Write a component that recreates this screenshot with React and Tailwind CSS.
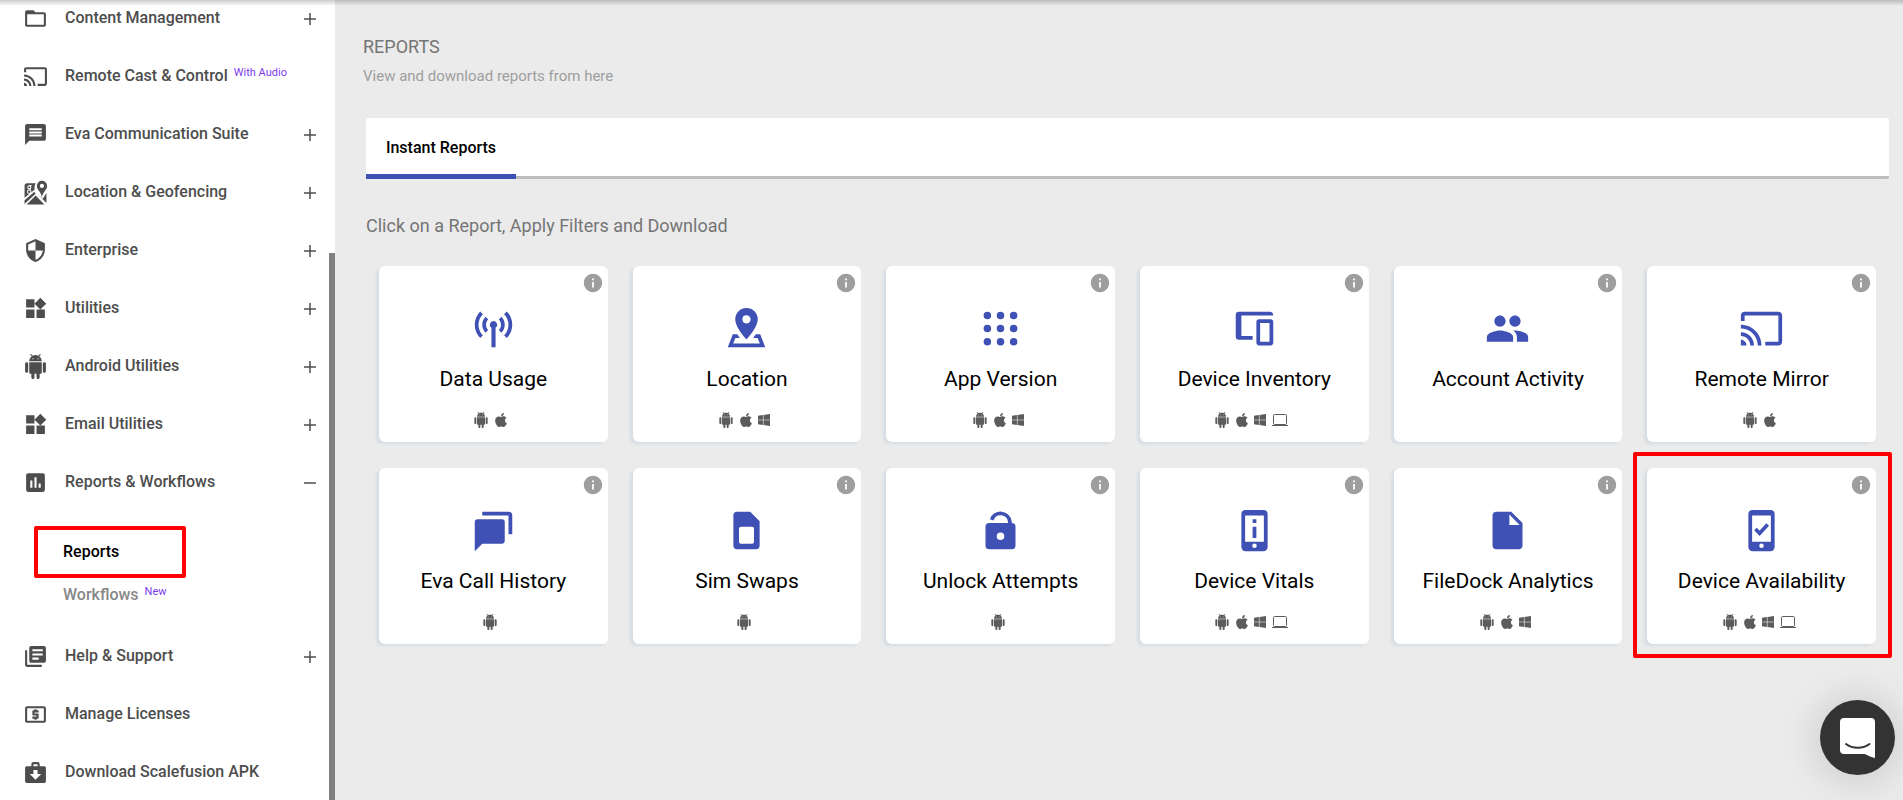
import React, { useState } from "react";
import {
  MdCast,
  MdFolderOpen,
  MdInfo,
  MdInsertDriveFile,
  MdLibraryBooks,
  MdLocalAtm,
  MdMessage,
  MdAssessment,
  MdPeople,
  MdSecurity,
  MdWidgets,
} from "react-icons/md";
import { FaApple, FaWindows } from "react-icons/fa";

const Svg = ({ children, className = "" }) => (
  <svg viewBox="0 0 24 24" fill="currentColor" className={className} aria-hidden="true">
    {children}
  </svg>
);

const AndroidIcon = ({ className }) => (
  <Svg className={className}>
    <path d="M6 18c0 .55.45 1 1 1h1v3.5c0 .83.67 1.5 1.5 1.5s1.5-.67 1.5-1.5V19h2v3.5c0 .83.67 1.5 1.5 1.5s1.5-.67 1.5-1.5V19h1c.55 0 1-.45 1-1V8H6v10zM3.5 8C2.67 8 2 8.67 2 9.5v7c0 .83.67 1.5 1.5 1.5S5 17.33 5 16.5v-7C5 8.67 4.33 8 3.5 8zm17 0c-.83 0-1.5.67-1.5 1.5v7c0 .83.67 1.5 1.5 1.5s1.5-.67 1.5-1.5v-7c0-.83-.67-1.5-1.5-1.5zm-4.97-5.84l1.3-1.3c.2-.2.2-.51 0-.71-.2-.2-.51-.2-.71 0l-1.48 1.48C13.85 1.23 12.95 1 12 1c-.96 0-1.86.23-2.66.63L7.85.15c-.2-.2-.51-.2-.71 0-.2.2-.2.51 0 .71l1.31 1.31C6.97 3.26 6 5.01 6 7h12c0-1.99-.97-3.75-2.47-4.84zM10 5H9V4h1v1zm5 0h-1V4h1v1z" />
  </Svg>
);

const MapsIcon = ({ className }) => (
  <Svg className={className}>
    <path d="M4 3a2.5 2.5 0 0 0-2.5 2.5V17L11.300 9.200C10.900 8 10.800 5 12.300 3z" />
    <path d="M3.500 23.500 12.200 14.800 20.500 23.500z" />
    <path d="M1.500 19.500 10.900 11.300 12 13.200 1.500 23z" />
    <path d="M14 13.500 22.500 22V12.500L19 18z" />
    <path
      fillRule="evenodd"
      d="M18.200.8a4.900 4.900 0 0 0-4.900 4.900c0 3.800 4 5.600 4.900 10.800.9-5.200 4.900-7 4.900-10.800A4.900 4.900 0 0 0 18.200.8zm0 2.900a2 2 0 1 1 0 4 2 2 0 0 1 0-4z"
    />
    <g fill="none" stroke="white" strokeWidth="1">
      <circle cx="6" cy="7" r="1.500" />
      <circle cx="6" cy="11.300" r="1.700" />
      <path d="M6 5.400h2.200M7.300 8l-1 1.600" />
    </g>
  </Svg>
);

const ApkIcon = ({ className }) => (
  <Svg className={className}>
    <path
      fillRule="evenodd"
      d="M10 2a2 2 0 0 0-2 2v2H3.500A1.500 1.500 0 0 0 2 7.500v13A1.500 1.500 0 0 0 3.500 22h17a1.500 1.500 0 0 0 1.500-1.500v-13A1.500 1.500 0 0 0 20.500 6H16V4a2 2 0 0 0-2-2zm0 2h4v2h-4zm0 5.500h4v4h3.500L12 19l-5.500-5.500H10z"
    />
  </Svg>
);

const TowerIcon = ({ className }) => (
  <Svg className={className}>
    <path d="M4.930 2.930C3.120 4.740 2 7.240 2 10s1.120 5.260 2.930 7.070l1.410-1.410C4.890 14.220 4 12.220 4 10s.89-4.220 2.340-5.660zM19.070 2.930l-1.410 1.410C19.110 5.790 20 7.790 20 10s-.89 4.220-2.340 5.660l1.410 1.410C20.880 15.260 22 12.760 22 10s-1.120-5.260-2.930-7.070zM7.760 5.760C6.670 6.850 6 8.350 6 10s.67 3.150 1.760 4.240l1.410-1.410C8.450 12.110 8 11.110 8 10s.45-2.110 1.170-2.830zM16.240 5.760l-1.410 1.410C15.550 7.890 16 8.890 16 10s-.45 2.110-1.170 2.830l1.410 1.410C17.330 13.150 18 11.650 18 10s-.67-3.150-1.760-4.240zM12 8a2 2 0 0 0-1.100 3.650V22h2.200V11.650A2 2 0 0 0 12 8z" />
  </Svg>
);

const LocationIcon = ({ className }) => (
  <Svg className={className}>
    <path
      fillRule="evenodd"
      d="M12 1a6 6 0 0 0-6 6c0 4.500 6 10.800 6 10.800S18 11.500 18 7a6 6 0 0 0-6-6zm0 3.900a2.200 2.200 0 1 1 0 4.400 2.200 2.200 0 0 1 0-4.400z"
    />
    <path d="M4.700 15h2.400c.4.700.9 1.400 1.400 2H6.100l-1.200 3h14.200l-1.200-3h-2.400c.5-.6 1-1.300 1.400-2h2.400L22 22H2z" />
  </Svg>
);

const AppsIcon = ({ className }) => (
  <Svg className={className}>
    {[5, 12, 19].map((y) =>
      [5, 12, 19].map((x) => <circle key={`${x}-${y}`} cx={x} cy={y} r="2" />)
    )}
  </Svg>
);

const DevicesIcon = ({ className }) => (
  <Svg className={className}>
    <path d="M22 5c0-1.100-.7-2-1.700-2H3.700A1.700 1.700 0 0 0 2 4.700v11.600A1.700 1.700 0 0 0 3.700 18H11v-2H5V5z" />
    <path
      fillRule="evenodd"
      d="M14.500 7A1.500 1.500 0 0 0 13 8.500v11a1.500 1.500 0 0 0 1.500 1.500h6a1.500 1.500 0 0 0 1.500-1.500v-11A1.500 1.500 0 0 0 20.500 7zm.5 2h5v10h-5z"
    />
  </Svg>
);

const ChatIcon = ({ className }) => (
  <Svg className={className}>
    <path d="M6 2h14a2 2 0 0 1 2 2v10h-2V4H6z" />
    <path d="M3.500 6h13A1.500 1.500 0 0 1 18 7.500v10a1.500 1.500 0 0 1-1.500 1.500H6l-4 4V7.500A1.500 1.500 0 0 1 3.500 6z" />
  </Svg>
);

const SimIcon = ({ className }) => (
  <Svg className={className}>
    <path
      fillRule="evenodd"
      d="M7 2a2 2 0 0 0-2 2v16a2 2 0 0 0 2 2h10a2 2 0 0 0 2-2V7l-5-5zm2 8h6a1 1 0 0 1 1 1v7a1 1 0 0 1-1 1H9a1 1 0 0 1-1-1v-7a1 1 0 0 1 1-1z"
    />
  </Svg>
);

const UnlockIcon = ({ className }) => (
  <Svg className={className}>
    <path d="M7.300 6.300A5 5 0 0 1 17 7.300V9" fill="none" stroke="currentColor" strokeWidth="2" />
    <path
      fillRule="evenodd"
      d="M6 8a2 2 0 0 0-2 2v10a2 2 0 0 0 2 2h12a2 2 0 0 0 2-2V10a2 2 0 0 0-2-2zm6 5a2 2 0 1 1 0 4 2 2 0 0 1 0-4z"
    />
  </Svg>
);

const PhoneIcon = ({ className, children }) => (
  <Svg className={className}>
    <path
      fillRule="evenodd"
      d="M7.200 1A2.200 2.200 0 0 0 5 3.200v17.600A2.200 2.200 0 0 0 7.200 23h9.600a2.200 2.200 0 0 0 2.200-2.200V3.200A2.200 2.200 0 0 0 16.800 1zM7 4h10v14H7zm5 14.900a1.200 1.200 0 1 1 0 2.400 1.200 1.200 0 0 1 0-2.400z"
    />
    {children}
  </Svg>
);

const VitalsIcon = ({ className }) => (
  <PhoneIcon className={className}>
    <path d="M11 6h2v2h-2zM11 10h2v6h-2z" />
  </PhoneIcon>
);

const AvailabilityIcon = ({ className }) => (
  <PhoneIcon className={className}>
    <path d="M8.800 11.200 11 13.500 15.300 8.800" fill="none" stroke="currentColor" strokeWidth="1.900" />
  </PhoneIcon>
);

const LaptopIcon = () => (
  <svg viewBox="0 0 16 14" className="h-3.5 w-4" fill="none" stroke="currentColor" aria-hidden="true">
    <rect x="1.500" y="1.500" width="13" height="10" rx="1" />
    <path d="M0 12.500h16" />
  </svg>
);

const platformIcons = {
  android: <AndroidIcon className="size-4" />,
  apple: <FaApple className="h-4 w-3" />,
  windows: <FaWindows className="h-3.5 w-3" />,
  laptop: <LaptopIcon />,
};

const menu = [
  { label: "Content Management", icon: MdFolderOpen, toggle: true },
  { label: "Remote Cast & Control", icon: MdCast, badge: "With Audio" },
  { label: "Eva Communication Suite", icon: MdMessage, toggle: true },
  { label: "Location & Geofencing", icon: MapsIcon, toggle: true },
  { label: "Enterprise", icon: MdSecurity, toggle: true },
  { label: "Utilities", icon: MdWidgets, toggle: true },
  { label: "Android Utilities", icon: AndroidIcon, toggle: true },
  { label: "Email Utilities", icon: MdWidgets, toggle: true },
  { label: "Reports & Workflows", icon: MdAssessment, toggle: true, submenu: true },
  { label: "Help & Support", icon: MdLibraryBooks, toggle: true },
  { label: "Manage Licenses", icon: MdLocalAtm },
  { label: "Download Scalefusion APK", icon: ApkIcon },
];

const reports = [
  { name: "Data Usage", icon: TowerIcon, platforms: ["android", "apple"] },
  { name: "Location", icon: LocationIcon, platforms: ["android", "apple", "windows"] },
  { name: "App Version", icon: AppsIcon, platforms: ["android", "apple", "windows"] },
  { name: "Device Inventory", icon: DevicesIcon, platforms: ["android", "apple", "windows", "laptop"] },
  { name: "Account Activity", icon: MdPeople, platforms: [] },
  { name: "Remote Mirror", icon: MdCast, platforms: ["android", "apple"] },
  { name: "Eva Call History", icon: ChatIcon, platforms: ["android"] },
  { name: "Sim Swaps", icon: SimIcon, platforms: ["android"] },
  { name: "Unlock Attempts", icon: UnlockIcon, platforms: ["android"] },
  { name: "Device Vitals", icon: VitalsIcon, platforms: ["android", "apple", "windows", "laptop"] },
  { name: "FileDock Analytics", icon: MdInsertDriveFile, platforms: ["android", "apple", "windows"] },
  {
    name: "Device Availability",
    icon: AvailabilityIcon,
    platforms: ["android", "apple", "windows", "laptop"],
    highlighted: true,
  },
];

const MenuItem = ({ item, open, onToggle }) => {
  const Icon = item.icon;
  const content = (
    <>
      <Icon className="size-[25px] shrink-0" />
      <span className="ml-[17px] whitespace-nowrap">{item.label}</span>
      {item.badge && (
        <span className="mb-1.5 ml-1.5 whitespace-nowrap text-[11px] font-normal text-[#7c3aed]">
          {item.badge}
        </span>
      )}
      {item.toggle && (
        <svg
          viewBox="0 0 12 12"
          className="ml-auto mt-0.5 size-3"
          stroke="currentColor"
          strokeWidth="1.500"
          aria-hidden="true"
        >
          <path d={open ? "M0 6h12" : "M0 6h12M6 0v12"} />
        </svg>
      )}
    </>
  );
  const rowClass =
    "flex h-[58px] w-full items-center pl-[23px] pr-[13px] text-left text-base font-medium text-[#4d4d4d]";

  return item.toggle ? (
    <button type="button" aria-expanded={open} onClick={onToggle} className={rowClass}>
      {content}
    </button>
  ) : (
    <a href="#" className={rowClass}>
      {content}
    </a>
  );
};

const Sidebar = () => {
  const [opened, setOpened] = useState("Reports & Workflows");

  return (
    <aside className="flex shrink-0 overflow-hidden bg-white">
      <nav className="-mt-[11px] w-[329px]">
        <ul>
          {menu.map((item) => {
            const open = opened === item.label;
            return (
              <li key={item.label}>
                <MenuItem
                  item={item}
                  open={open}
                  onToggle={() => setOpened(open ? null : item.label)}
                />
                {item.submenu && open && (
                  <div className="flex flex-col items-start pb-[15px] pl-[34px] pt-[15px] text-base font-medium">
                    <a
                      href="#"
                      className="flex h-[52px] w-[152px] items-center rounded-xs border-4 border-[#ff0000] pl-[25px] text-black"
                    >
                      Reports
                    </a>
                    <a href="#" className="flex h-[34px] items-center pl-[29px] text-[#888888]">
                      Workflows
                      <span className="mb-1.5 ml-1.5 text-[11px] font-normal text-[#7c3aed]">New</span>
                    </a>
                  </div>
                )}
              </li>
            );
          })}
        </ul>
      </nav>
      <div className="mt-[253px] w-1.5 bg-[#808080]" />
    </aside>
  );
};

const ReportCard = ({ report }) => {
  const Icon = report.icon;
  return (
    <article className="relative flex h-[176px] flex-col items-center rounded-md bg-white pt-10 shadow-[-3px_2px_3px_#d6dde3]">
      <Icon className="size-[45px] text-[#3f51b5]" />
      <h2 className="mt-3.5 whitespace-nowrap text-[21px] leading-7 text-black">
        <a href="#">{report.name}</a>
      </h2>
      <div className="mt-[19px] flex h-4 items-center text-[#5c5c5c]">
        {report.platforms.map((platform) => (
          <span key={platform} className="mr-1.5">
            {platformIcons[platform]}
          </span>
        ))}
      </div>
      <button
        type="button"
        aria-label={`About ${report.name}`}
        className="absolute right-1 top-1.5 text-[#9e9e9e]"
      >
        <MdInfo className="size-[22px]" />
      </button>
      {report.highlighted && (
        <div className="pointer-events-none absolute -bottom-3.5 -left-3.5 -right-4 -top-4 rounded-xs border-4 border-[#ff0000]" />
      )}
    </article>
  );
};

const App = () => {
  return (
    <div className="relative flex h-screen overflow-hidden bg-[#ebebeb] font-[Roboto,sans-serif]">
      <Sidebar />

      <main className="min-w-0 flex-1 pr-3.5 pt-[35px]">
        <header className="pl-7">
          <h1 className="text-lg leading-6 text-[#757575]">REPORTS</h1>
          <p className="mt-[5px] text-[15px] leading-6 text-[#9e9e9e]">
            View and download reports from here
          </p>
        </header>

        <div className="ml-[31px] mt-[30px]">
          <div role="tablist" className="flex h-[61px] rounded-xs border-b-3 border-[#bdbdbd] bg-white">
            <button
              type="button"
              role="tab"
              aria-selected="true"
              className="-mb-[3px] w-[150px] border-b-[5px] border-[#3f51b5] pt-1 text-base font-medium text-black"
            >
              Instant Reports
            </button>
          </div>

          <p className="mt-[35px] text-lg leading-6 text-[#757575]">
            Click on a Report, Apply Filters and Download
          </p>

          <section className="mt-7 grid grid-cols-6 gap-x-[25px] gap-y-[26px] px-[13px]">
            {reports.map((report) => (
              <ReportCard key={report.name} report={report} />
            ))}
          </section>
        </div>
      </main>

      {/* shadow of the top bar */}
      <div className="pointer-events-none absolute inset-x-0 top-0 h-1.5 bg-linear-to-b from-black/20 to-transparent" />

      <button
        type="button"
        aria-label="Open chat"
        className="fixed bottom-[25px] right-2 flex size-[75px] items-center justify-center rounded-full bg-[#333333] shadow-[0_2px_40px_rgba(0,0,0,0.18)]"
      >
        <svg viewBox="0 0 35 40" className="h-10 w-[35px]" aria-hidden="true">
          <path
            d="M4 0h27a4 4 0 0 1 4 4v36c-4-1-7-2.500-10.500-4H4a4 4 0 0 1-4-4V4a4 4 0 0 1 4-4z"
            fill="white"
          />
          <path
            d="M6 26c6.500 5 17 5 23.500 0"
            fill="none"
            stroke="#333333"
            strokeWidth="2"
            strokeLinecap="round"
          />
        </svg>
      </button>
    </div>
  );
};

export default App;
